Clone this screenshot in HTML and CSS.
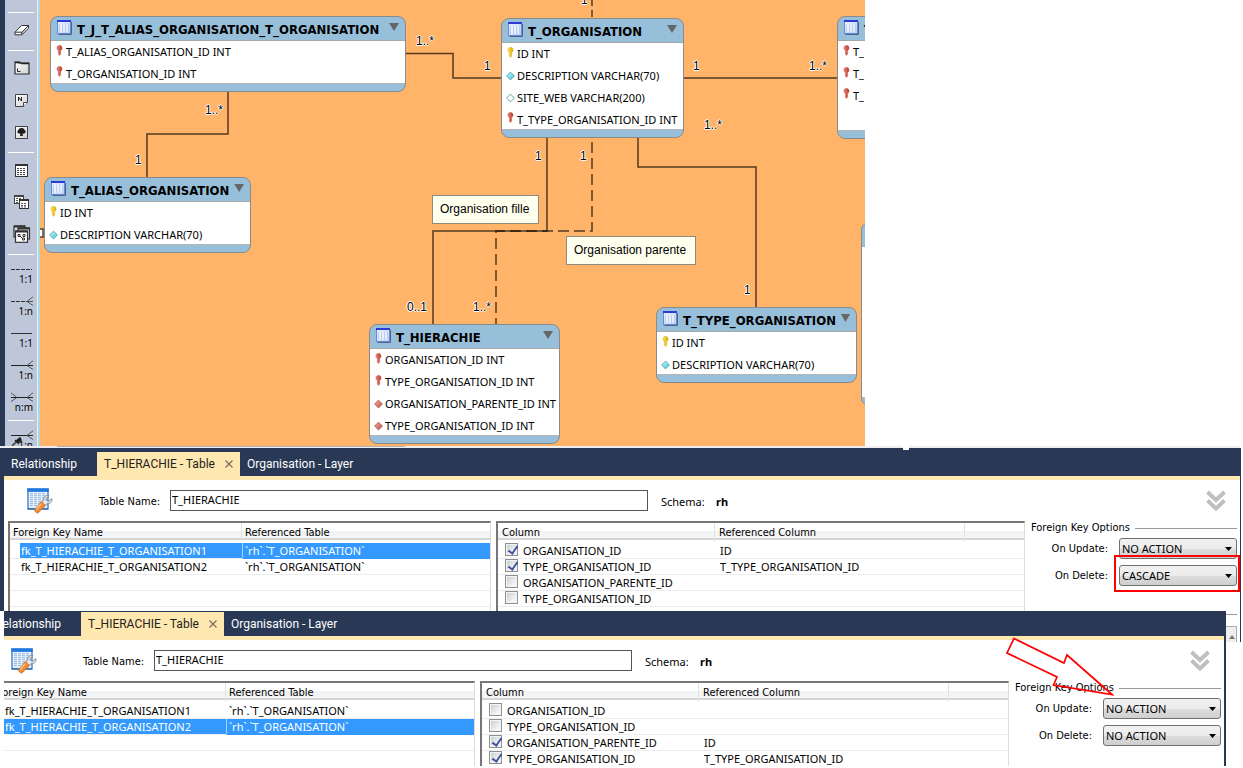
FILE: index.html
```html
<!DOCTYPE html>
<html lang="fr">
<head>
<meta charset="utf-8">
<title>T_HIERACHIE - Table</title>
<link rel="stylesheet" href="styles.css">
</head>
<body>
<svg class="defs" aria-hidden="true">
  <defs>
    <linearGradient id="gRed" x1="0" y1="0" x2="1" y2="0"><stop offset="0" stop-color="#e98276"/><stop offset="1" stop-color="#b63e33"/></linearGradient>
    <linearGradient id="gYellow" x1="0" y1="0" x2="1" y2="0"><stop offset="0" stop-color="#ffe95a"/><stop offset="1" stop-color="#d9a900"/></linearGradient>
    <linearGradient id="gCyan" x1="0" y1="0" x2="1" y2="1"><stop offset="0" stop-color="#c8fbff"/><stop offset="1" stop-color="#3cc5d2"/></linearGradient>
    <linearGradient id="gRose" x1="0" y1="0" x2="1" y2="1"><stop offset="0" stop-color="#f3b0a8"/><stop offset="1" stop-color="#c24a40"/></linearGradient>
    <linearGradient id="gPane" x1="0" y1="0" x2="1" y2="1"><stop offset="0" stop-color="#fff"/><stop offset="1" stop-color="#cfd0cf"/></linearGradient>
    <linearGradient id="gCols" x1="0" y1="0" x2="1" y2="1"><stop offset="0" stop-color="#eef4ff"/><stop offset="1" stop-color="#b5cdf5"/></linearGradient>
    <symbol id="table" viewBox="0 0 15 15">
      <path d="M1.500 14.500h13V2" fill="none" stroke="#4c6486"/>
      <rect x=".5" y=".5" width="13" height="13" fill="url(#gCols)" stroke="#6b87d8"/>
      <path d="M0 1h14" stroke="#2b3bd6" stroke-width="2"/>
      <path d="M2.500 4v8M5.500 4v8M8.500 4v8M11.500 4v8" stroke="#b9cdf3"/>
      <path d="M4 4v8M7 4v8M10 4v8" stroke="#fff"/>
    </symbol>
    <symbol id="keyRed" viewBox="0 0 7 11">
      <path d="M1 1.800 2.300.5h2.400L6 1.800v2.400L4.700 5.500V9l-1.200 1.500L2.300 9V5.500L1 4.200z" fill="url(#gRed)" stroke="#d0665b" stroke-width=".5"/>
    </symbol>
    <symbol id="keyYellow" viewBox="0 0 7 11">
      <path d="M1 1.800 2.300.5h2.400L6 1.800v2.400L4.700 5.500V9l-1.200 1.500L2.300 9V5.500L1 4.200z" fill="url(#gYellow)" stroke="#d8b21c" stroke-width=".5"/>
    </symbol>
    <symbol id="cyan" viewBox="0 0 9 9"><path d="M4.500.6 8.400 4.500 4.500 8.400.6 4.500z" fill="url(#gCyan)" stroke="#4b9ba5" stroke-width=".8"/></symbol>
    <symbol id="hollow" viewBox="0 0 9 9"><path d="M4.500.6 8.400 4.500 4.500 8.400.6 4.500z" fill="#fff" stroke="#4b9ba5" stroke-width=".9"/></symbol>
    <symbol id="rose" viewBox="0 0 9 9"><path d="M4.500.6 8.400 4.500 4.500 8.400.6 4.500z" fill="url(#gRose)" stroke="#a55850" stroke-width=".8"/></symbol>
    <symbol id="tableEdit" viewBox="0 0 26 26">
      <rect x="1" y="1" width="20" height="20" fill="#e9f2fd" stroke="#4f87cf" stroke-width="1.500"/>
      <path d="M.3 2.200h21.400" stroke="#1f7be0" stroke-width="3.400"/>
      <path d="M4.500 5v14M8.500 5v14M12.500 5v14M16.500 5v14" stroke="#a5bfe6" stroke-width="3" stroke-dasharray="1.200 .8"/>
      <path d="M1 20.800h20" stroke="#3c70b5" stroke-width="1.500"/>
      <path d="M24.800 10.500 22 13.200l-2.300-.6-.5-2.200 2.700-2.800c-2.600-1-5.400 1-5 4.100l-2.500 2.700 3.600 3.400 2.700-2.500c3 .5 4.900-2 4.100-4.800z" fill="#e4e6e8" stroke="#7e8388" stroke-width=".9"/>
      <path d="m14.300 13.700 4 3.800-7 7.200c-1.300 1-4.100-1.200-3.400-3.300z" fill="#f08a30" stroke="#bf5d17" stroke-width=".7"/>
      <path d="m14.300 15.500-5 6" stroke="#ffc68c" stroke-width="1.200"/>
    </symbol>
    <symbol id="chevrons" viewBox="0 0 20 21">
      <path d="m1.500 2 8.500 8 8.500-8M1.500 10.500l8.500 8 8.500-8" fill="none" stroke="#bfbfbf" stroke-width="4"/>
    </symbol>
  </defs>
</svg>

<main class="page">
  <section class="workspace">
    <nav class="tools" aria-label="Outils">
      <hr class="sep">
      <button class="tool" aria-label="Effacer"><svg width="16" height="12" viewBox="0 0 16 12"><path d="M1 8.200 7.500 1.500h7L8 8.200zM1 8.200v2.600h6.500l.5-2.600M8 10.800l6.500-6.600V1.500" fill="#fff" stroke="#333"/></svg></button>
      <hr class="sep">
      <button class="tool" aria-label="Calque"><svg width="16" height="14" viewBox="0 0 16 14"><path d="M1 1h4v1h10v11H1z" fill="url(#gPane)" stroke="#2f2f2f" stroke-width="1.200"/><path d="M1 1.500h6M7 2.500h8" stroke="#222" stroke-width="1.500"/><path d="M3.500 7.500v3h3" fill="none" stroke="#222"/></svg></button>
      <button class="tool" aria-label="Note"><svg width="13" height="13" viewBox="0 0 13 13"><path d="M.5.5h12v8l-4 4h-8z" fill="url(#gPane)" stroke="#444"/><path d="M12.500 8.500h-4v4" fill="#fff" stroke="#444"/><path d="M3.500 7V3l3 4V3" fill="none" stroke="#222"/></svg></button>
      <button class="tool" aria-label="Image"><svg width="13" height="13" viewBox="0 0 13 13"><rect x=".5" y=".5" width="12" height="12" fill="url(#gPane)" stroke="#444"/><path d="M6.500 2c2.500 0 2.600 1.500 3.400 2.300 1.600 1.600.6 3.700-2.400 3.400L8 10H5l.5-2.300C2.500 8 1.500 6 3.100 4.300 3.900 3.500 4 2 6.500 2z" fill="#1d1d1d"/></svg></button>
      <hr class="sep">
      <button class="tool" aria-label="Table"><svg width="13" height="13" viewBox="0 0 13 13"><rect x=".5" y=".5" width="12" height="12" fill="#fff" stroke="#333"/><path d="M0 1h13" stroke="#333" stroke-width="2"/><path d="M2 4.500h9M2 6.500h9M2 8.500h9M2 10.500h9" stroke="#444" stroke-dasharray="2 1"/></svg></button>
      <button class="tool" aria-label="Vue"><svg width="15" height="14" viewBox="0 0 15 14"><rect x=".5" y=".5" width="9" height="8" fill="#fff" stroke="#444"/><path d="M0 1h10" stroke="#444" stroke-width="2"/><path d="M2 3.500h6M2 5.500h3M2 7.500h3" stroke="#555" stroke-dasharray="2 1"/><rect x="5.500" y="4.500" width="9" height="9" fill="#fff" stroke="#333"/><path d="M5 5h10" stroke="#333" stroke-width="2"/><path d="M7 8.500h6M7 10.500h6M7 12h6" stroke="#555" stroke-dasharray="2 1"/></svg></button>
      <button class="tool" aria-label="Groupe de routines"><svg width="18" height="18" viewBox="0 0 18 18"><rect x="1" y="1" width="11" height="11" fill="#ddd" stroke="#333" stroke-width="1.200"/><path d="M1 1.500h11" stroke="#333" stroke-width="2"/><rect x="5" y="3" width="11.500" height="11" fill="#ddd" stroke="#333" stroke-width="1.200"/><path d="M5 3.500h12" stroke="#333" stroke-width="2"/><rect x="2.500" y="6" width="12" height="11.300" fill="#fff" stroke="#333" stroke-width="1.200"/><path d="M2.500 6.500h12" stroke="#333" stroke-width="2"/><path d="M5 9.500h2v2H5zM10 9.500h2v2h-2zM9.500 13h2v2h-2zM7 11l2.500 2.500" fill="none" stroke="#333"/></svg></button>
      <hr class="sep">
      <button class="tool rel"><svg width="22" height="10" viewBox="0 0 22 10"><path d="M0 5.500h21" stroke="#333" stroke-dasharray="4 1"/></svg><span>1:1</span></button>
      <button class="tool rel"><svg width="22" height="10" viewBox="0 0 22 10"><path d="M0 5.500h16" stroke="#333" stroke-dasharray="4 1"/><path d="m22 .8-6 4.700 6 4M16 5.500h6" fill="none" stroke="#555"/></svg><span>1:n</span></button>
      <button class="tool rel"><svg width="22" height="10" viewBox="0 0 22 10"><path d="M0 5.500h21" stroke="#333"/></svg><span>1:1</span></button>
      <button class="tool rel"><svg width="22" height="10" viewBox="0 0 22 10"><path d="M0 5.500h22" stroke="#222"/><path d="m22 .8-6 4.700 6 4" fill="none" stroke="#555"/></svg><span>1:n</span></button>
      <button class="tool rel"><svg width="22" height="10" viewBox="0 0 22 10"><path d="M0 5.500h22" stroke="#222"/><path d="m22 .8-6 4.700 6 4M0 .8l6 4.700-6 4" fill="none" stroke="#555"/></svg><span>n:m</span></button>
      <hr class="sep">
      <button class="tool rel pick"><svg width="22" height="20" viewBox="0 0 22 20"><path d="M0 5.500h22" stroke="#222"/><path d="m22 .8-6 4.700 6 4" fill="none" stroke="#555"/><path d="m1 16 5-5" stroke="#555" stroke-width="2"/><path d="m4 10 4 4M5 11l4-3 1 2-3 3z" fill="#222" stroke="#222" stroke-width="1.500"/></svg><span>1:n</span></button>
    </nav>

    <div class="canvas">
      <svg class="links" width="825" height="446" aria-hidden="true">
        <g transform="translate(-40 0)" fill="none" stroke="#000" stroke-opacity=".68" stroke-width="1.500">
          <path d="M406 53.500H453V78H501M228 92V134H147V177M684 78H837M547 138V231H433V324M638 138V167H756V307"/>
          <path d="M592 142V231H496V324" stroke-dasharray="11 5"/>
          <path d="M592 0V17" stroke-dasharray="6 4 12 1"/>
          <rect x="36" y="229" width="7" height="8" fill="#fff"/>
        </g>
      </svg>

      <article class="entity alias-link">
        <h2><svg><use href="#table"/></svg>T_J_T_ALIAS_ORGANISATION_T_ORGANISATION</h2>
        <ul>
          <li><svg class="key"><use href="#keyRed"/></svg>T_ALIAS_ORGANISATION_ID INT</li>
          <li><svg class="key"><use href="#keyRed"/></svg>T_ORGANISATION_ID INT</li>
        </ul>
      </article>
      <article class="entity alias">
        <h2><svg><use href="#table"/></svg>T_ALIAS_ORGANISATION</h2>
        <ul>
          <li><svg class="key"><use href="#keyYellow"/></svg>ID INT</li>
          <li><svg><use href="#cyan"/></svg>DESCRIPTION VARCHAR(70)</li>
        </ul>
      </article>
      <article class="entity organisation">
        <h2><svg><use href="#table"/></svg>T_ORGANISATION</h2>
        <ul>
          <li><svg class="key"><use href="#keyYellow"/></svg>ID INT</li>
          <li><svg><use href="#cyan"/></svg>DESCRIPTION VARCHAR(70)</li>
          <li><svg><use href="#hollow"/></svg>SITE_WEB VARCHAR(200)</li>
          <li><svg class="key"><use href="#keyRed"/></svg>T_TYPE_ORGANISATION_ID INT</li>
        </ul>
      </article>
      <article class="entity hierachie">
        <h2><svg><use href="#table"/></svg>T_HIERACHIE</h2>
        <ul>
          <li><svg class="key"><use href="#keyRed"/></svg>ORGANISATION_ID INT</li>
          <li><svg class="key"><use href="#keyRed"/></svg>TYPE_ORGANISATION_ID INT</li>
          <li><svg><use href="#rose"/></svg>ORGANISATION_PARENTE_ID INT</li>
          <li><svg><use href="#rose"/></svg>TYPE_ORGANISATION_ID INT</li>
        </ul>
      </article>
      <article class="entity type">
        <h2><svg><use href="#table"/></svg>T_TYPE_ORGANISATION</h2>
        <ul>
          <li><svg class="key"><use href="#keyYellow"/></svg>ID INT</li>
          <li><svg><use href="#cyan"/></svg>DESCRIPTION VARCHAR(70)</li>
        </ul>
      </article>
      <article class="entity edge-top">
        <h2><svg><use href="#table"/></svg>T</h2>
        <ul>
          <li><svg class="key"><use href="#keyRed"/></svg>T_</li>
          <li><svg class="key"><use href="#keyRed"/></svg>T_</li>
          <li><svg class="key"><use href="#keyRed"/></svg>T_</li>
        </ul>
      </article>
      <article class="entity edge-low"><h2></h2><ul></ul></article>

      <p class="note fille">Organisation fille</p>
      <p class="note parente">Organisation parente</p>

      <span class="card" style="left:541px;top:-7px">1</span>
      <span class="card" style="left:376px;top:34px">1..*</span>
      <span class="card" style="left:444px;top:59px">1</span>
      <span class="card" style="left:165px;top:103px">1..*</span>
      <span class="card" style="left:95px;top:153px">1</span>
      <span class="card" style="left:653px;top:59px">1</span>
      <span class="card" style="left:769px;top:59px">1..*</span>
      <span class="card" style="left:664px;top:118px">1..*</span>
      <span class="card" style="left:495px;top:149px">1</span>
      <span class="card" style="left:540px;top:149px">1</span>
      <span class="card" style="left:367px;top:300px">0..1</span>
      <span class="card" style="left:433px;top:300px">1..*</span>
      <span class="card" style="left:704px;top:283px">1</span>
    </div>
    <div class="blank"></div>
  </section>
  <div class="splitter"><i></i></div>

  <section class="editor first">
    <div class="tabs">
      <button class="tab">Relationship</button>
      <button class="tab active">T_HIERACHIE - Table <svg width="8" height="8" viewBox="0 0 8 8"><path d="m.5.5 7 7m0-7-7 7" stroke="#77705c" stroke-width="1.200"/></svg></button>
      <button class="tab">Organisation - Layer</button>
    </div>
    <div class="sheet">
      <div class="name-row">
        <svg class="big"><use href="#tableEdit"/></svg>
        <label for="name1">Table Name:</label>
        <input class="name" id="name1" type="text" value="T_HIERACHIE">
        <span class="schema">Schema:</span><b>rh</b>
        <button class="fold" aria-label="Replier"><svg><use href="#chevrons"/></svg></button>
      </div>
      <div class="panes">
        <table class="grid keys">
          <colgroup><col class="k1"><col></colgroup>
          <thead><tr><th>Foreign Key Name</th><th>Referenced Table</th></tr></thead>
          <tbody>
            <tr class="on"><td>fk_T_HIERACHIE_T_ORGANISATION1</td><td>`rh`.`T_ORGANISATION`</td></tr>
            <tr><td>fk_T_HIERACHIE_T_ORGANISATION2</td><td>`rh`.`T_ORGANISATION`</td></tr>
            <tr><td></td><td></td></tr>
            <tr><td></td><td></td></tr>
            <tr><td></td><td></td></tr>
          </tbody>
        </table>
        <table class="grid cols">
          <colgroup><col class="c1"><col class="c2"><col></colgroup>
          <thead><tr><th>Column</th><th>Referenced Column</th><th></th></tr></thead>
          <tbody>
            <tr><td><label><input type="checkbox" checked>ORGANISATION_ID</label></td><td>ID</td><td></td></tr>
            <tr><td><label><input type="checkbox" checked>TYPE_ORGANISATION_ID</label></td><td>T_TYPE_ORGANISATION_ID</td><td></td></tr>
            <tr><td><label><input type="checkbox">ORGANISATION_PARENTE_ID</label></td><td></td><td></td></tr>
            <tr><td><label><input type="checkbox">TYPE_ORGANISATION_ID</label></td><td></td><td></td></tr>
            <tr><td></td><td></td><td></td></tr>
          </tbody>
        </table>
        <div class="options">
          <div class="legend">Foreign Key Options</div>
          <div class="field"><label for="u1">On Update:</label><span class="drop"><select id="u1"><option>NO ACTION</option></select></span></div>
          <div class="field"><label for="d1">On Delete:</label><span class="drop marked"><select id="d1"><option>CASCADE</option></select></span></div>
          <div class="more"><span></span></div>
        </div>
      </div>
    </div>
  </section>

  <section class="editor second">
    <div class="shift">
      <div class="tabs">
        <button class="tab">Relationship</button>
        <button class="tab active">T_HIERACHIE - Table <svg width="8" height="8" viewBox="0 0 8 8"><path d="m.5.5 7 7m0-7-7 7" stroke="#77705c" stroke-width="1.200"/></svg></button>
        <button class="tab">Organisation - Layer</button>
      </div>
      <div class="sheet">
        <div class="name-row">
          <svg class="big"><use href="#tableEdit"/></svg>
          <label for="name2">Table Name:</label>
          <input class="name" id="name2" type="text" value="T_HIERACHIE">
          <span class="schema">Schema:</span><b>rh</b>
          <button class="fold" aria-label="Replier"><svg><use href="#chevrons"/></svg></button>
        </div>
        <div class="panes">
          <table class="grid keys">
            <colgroup><col class="k1"><col></colgroup>
            <thead><tr><th>Foreign Key Name</th><th>Referenced Table</th></tr></thead>
            <tbody>
              <tr><td>fk_T_HIERACHIE_T_ORGANISATION1</td><td>`rh`.`T_ORGANISATION`</td></tr>
              <tr class="on"><td>fk_T_HIERACHIE_T_ORGANISATION2</td><td>`rh`.`T_ORGANISATION`</td></tr>
              <tr><td></td><td></td></tr>
              <tr><td></td><td></td></tr>
              <tr><td></td><td></td></tr>
            </tbody>
          </table>
          <table class="grid cols">
            <colgroup><col class="c1"><col class="c2"><col></colgroup>
            <thead><tr><th>Column</th><th>Referenced Column</th><th></th></tr></thead>
            <tbody>
              <tr><td><label><input type="checkbox">ORGANISATION_ID</label></td><td></td><td></td></tr>
              <tr><td><label><input type="checkbox">TYPE_ORGANISATION_ID</label></td><td></td><td></td></tr>
              <tr><td><label><input type="checkbox" checked>ORGANISATION_PARENTE_ID</label></td><td>ID</td><td></td></tr>
              <tr><td><label><input type="checkbox" checked>TYPE_ORGANISATION_ID</label></td><td>T_TYPE_ORGANISATION_ID</td><td></td></tr>
              <tr><td></td><td></td><td></td></tr>
            </tbody>
          </table>
          <div class="options">
            <div class="legend">Foreign Key Options</div>
            <div class="field"><label for="u2">On Update:</label><span class="drop"><select id="u2"><option>NO ACTION</option></select></span></div>
            <div class="field"><label for="d2">On Delete:</label><span class="drop"><select id="d2"><option>NO ACTION</option></select></span></div>
          </div>
        </div>
      </div>
    </div>
    <svg class="arrow" width="110" height="62" viewBox="0 0 110 62" aria-hidden="true"><path d="M10 2.500 60 27 63 19 108 58.500 49.500 49 53 41 3 17z" fill="none" stroke="#f00" stroke-width="1.700"/></svg>
  </section>
</main>
</body>
</html>
```
FILE: styles.css
```css
* { box-sizing: border-box; }
body {
  margin: 0;
  background: #fff;
  color: #000;
  font: 11px/16px "Noto Sans", "DejaVu Sans Condensed", sans-serif;
}
.defs { position: absolute; width: 0; height: 0; }
h2, p, ul { margin: 0; padding: 0; list-style: none; }
button { border: 0; background: none; padding: 0; font: inherit; color: inherit; }
.page { overflow: hidden; }

/* Diagram workspace */
.workspace { display: flex; height: 446px; }
.tools {
  flex: none;
  width: 40px;
  padding-top: 8px;
  background: #bdc7d9;
  border-left: 5px solid #293955;
  border-right: 2px solid #a9d9de;
  box-shadow: inset -1px 0 #e9eef5;
  overflow: hidden;
}
.sep { height: 6px; margin: 0 4px 0 3px; border: 0; background: linear-gradient(#fff, #fff) 0 4px / 100% 1px no-repeat; }
.tool { display: flex; align-items: center; justify-content: center; width: 33px; height: 32px; }
.tool.rel {
  flex-direction: column;
  align-items: flex-end;
  justify-content: flex-start;
  padding: 8px 5px 0 0;
  font-size: 10px;
  line-height: 10px;
}
.tool.pick svg { margin-bottom: -10px; }
.canvas { position: relative; flex: 825 1 0; background: #ffb469; overflow: hidden; }
.blank { flex: 378 1 0; }
.links { position: absolute; left: 0; top: 0; }

.entity {
  position: absolute;
  background: #98bfda;
  border: 1px solid #8a8a8a;
  border-radius: 8px;
  padding-bottom: 7px;
}
.entity h2 {
  display: flex;
  align-items: center;
  gap: 5px;
  height: 24px;
  padding: 2px 6px 0;
  border-bottom: 1px solid #a8a8a8;
  font: bold 13px/16px "DejaVu Sans Condensed", "Noto Sans", sans-serif;
}
.entity h2 svg { flex: none; width: 15px; height: 15px; margin-top: -4px; }
.entity h2::after {
  content: "";
  width: 10px;
  height: 8px;
  margin: -5px 0 0 auto;
  background: #666;
  clip-path: polygon(0 0, 100% 0, 50% 100%);
}
.entity ul {
  display: flex;
  flex-direction: column;
  gap: 2px;
  padding-top: 1px;
  background: #fff;
  border-bottom: 1px solid #b5b5b5;
}
.entity li { display: flex; align-items: center; height: 20px; padding-left: 4px; gap: 2px; white-space: nowrap; }
.entity li:last-child { height: 19px; }
.entity li svg { flex: none; width: 9px; height: 10px; }
.entity li .key { height: 11px; margin-top: -4px; }
.alias-link { left: 10px; top: 16px; width: 356px; }
.alias { left: 4px; top: 177px; width: 207px; }
.organisation { left: 461px; top: 18px; width: 183px; }
.hierachie { left: 329px; top: 324px; width: 191px; }
.type { left: 616px; top: 307px; width: 201px; }
.edge-top { left: 797px; top: 16px; width: 180px; }
.edge-top ul { padding-bottom: 25px; }
.edge-low { left: 821px; top: 222px; width: 120px; }
.edge-low ul { height: 151px; }

.note {
  position: absolute;
  padding: 6px 9px 6px 7px;
  border: 1px solid #8c8c80;
  background: #ffffee;
  font: 12px/15px "Liberation Sans", Arial, sans-serif;
  white-space: nowrap;
}
.fille { left: 392px; top: 195px; }
.parente { left: 526px; top: 236px; }
.card {
  position: absolute;
  font: 12px/14px "Liberation Sans", Arial, sans-serif;
  text-shadow: 1px 0 #fff, -1px 0 #fff, 0 1px #fff, 0 -1px #fff;
}

.splitter {
  position: relative;
  height: 2px;
  margin-right: 3px;
  background: linear-gradient(#b0b0b0, #b0b0b0) 57px 0 / 348px 1px no-repeat #eee;
}
.splitter i { position: absolute; z-index: 1; left: 903px; top: 0; width: 6px; height: 4px; background: #fff; }

/* Table editors */
.editor { position: relative; background: #fff; }
.first { margin-right: 2px; height: 194px; border-right: 1px solid #293955; overflow: hidden; }
.first::before { content: ""; position: absolute; left: 0; top: 0; width: 4px; height: 163px; background: #293955; }
.first .tabs, .first .sheet { margin-left: 4px; }
.second {
  margin: -31px 17px 0 4px;
  border-right: 2px solid #293955;
  overflow: hidden;
  height: 155px;
}
.shift { margin-left: -16px; }
.tabs {
  display: flex;
  padding-top: 4px;
  background: #293955;
  border-bottom: 4px solid #ffe8b0;
  color: #fff;
  font: 12px/24px Roboto, "Liberation Sans", sans-serif;
}
.second .tabs { padding-top: 1px; }
.tab { padding: 0 7px; white-space: nowrap; }
.tab:first-child { width: 93px; text-align: left; }
.tab.active { display: flex; align-items: center; justify-content: space-between; width: 143px; background: #ffe8b0; color: #222; }
.sheet { height: 162px; overflow: hidden; }
.name-row { display: flex; align-items: center; height: 41px; padding: 0 14px 0 23px; }
.name-row label, .grid th, .legend, .field label { font-family: "DejaVu Sans Condensed", "Noto Sans", sans-serif; }
.big { flex: none; width: 26px; height: 26px; margin-right: 46px; }
.name-row label, .schema { padding-top: 3px; }
.name-row label { width: 71px; }
.name {
  flex: 0 1 478px;
  min-width: 0;
  height: 21px;
  padding: 0 1px 3px;
  border: 1px solid #555;
  background: #fff;
  font: inherit;
}
.schema { width: 55px; margin-left: 13px; }
.name-row b { padding-top: 3px; }
.fold { width: 20px; height: 21px; margin-left: auto; }
.fold svg { display: block; width: 20px; height: 21px; }
.panes {
  display: grid;
  grid-template-columns: minmax(0, 483fr) 5px minmax(0, 529fr) 6px 209px;
  align-items: start;
  padding-left: 4px;
}
.keys { grid-column: 1; }
.cols { grid-column: 3; }
.options { grid-column: 5; }

.grid {
  width: 100%;
  table-layout: fixed;
  border-collapse: separate;
  border-spacing: 0;
  border: 1px solid #ddd;
  border-top: 2px solid #777;
  border-left: 2px solid #777;
}
.grid th, .grid td { padding: 0; text-align: left; white-space: nowrap; line-height: 15px; font-weight: normal; }
.grid th {
  height: 20px;
  padding: 2px 0 0 4px;
  border-bottom: 3px solid #fff;
  border-right: 1px solid #e2e2e2;
  background: linear-gradient(#fff 45%, #f1f2f4 46%, #f4f5f6 90%, #d5d5d5 91%);
}
.grid th:last-child { border-right: 0; }
.grid td { height: 16px; border-bottom: 1px solid #ededed; }
.grid.keys th { padding-left: 3px; }
.k1 { width: 232px; }
.c1 { width: 217px; }
.c2 { width: 250px; }
.keys td:first-child { padding-left: 11px; }
.keys td + td { padding-left: 2px; border-left: 1px solid transparent; }
.cols td + td { padding-left: 5px; }
.on td { color: #fff; background: #3399ff; border-bottom-color: #3399ff; }
.on td:first-child {
  background: linear-gradient(#39f, #39f) 10px 0 no-repeat;
  border-bottom-color: #ededed;
}
.keys .on td + td { border-left-color: #a9d1fb; }
.cols label { display: flex; align-items: center; gap: 5px; height: 15px; padding-left: 7px; }
.cols input {
  appearance: none;
  flex: none;
  position: relative;
  width: 13px;
  height: 13px;
  margin: 0 0 2px;
  border: 1px solid #8e8f8f;
  background: linear-gradient(135deg, #c4c9d1, #f6f6f6 75%);
  box-shadow: inset 0 0 0 1px #f4f4f4;
}
.cols input:checked::after {
  content: "";
  position: absolute;
  left: 4px;
  top: 0;
  width: 4px;
  height: 8px;
  border: solid #3f56a0;
  border-width: 0 2px 2px 0;
  rotate: 35deg;
}

.options { padding-right: 3px; }
.legend { display: flex; align-items: center; gap: 5px; height: 14px; margin-bottom: 3px; }
.legend::after { content: ""; flex: 1; height: 1px; background: #999; }
.field { display: flex; align-items: center; justify-content: flex-end; gap: 11px; margin-bottom: 6px; }
.drop { position: relative; width: 118px; height: 21px; }
.drop::after {
  content: "";
  position: absolute;
  right: 5px;
  top: 9px;
  width: 7px;
  height: 4px;
  background: #000;
  clip-path: polygon(0 0, 100% 0, 50% 100%);
}
.drop select {
  appearance: none;
  width: 100%;
  height: 21px;
  padding: 0 2px;
  border: 1px solid #707070;
  border-radius: 3px;
  background: linear-gradient(#f2f2f2, #ebebeb 50%, #dddddd 51%, #cfcfcf);
  color: #000;
  font: inherit;
}
.marked::before {
  content: "";
  position: absolute;
  z-index: 1;
  inset: -10px -3px -6px -5px;
  border: 2px solid #f00;
}
.more { margin-top: 28px; border-top: 1px solid #999; padding-top: 11px; }
.more span { display: block; height: 20px; border: 1px solid #aaa; background: #eee; }
.more span::after {
  content: "";
  display: block;
  width: 6px;
  height: 4px;
  margin: 8px 1px 0 auto;
  background: #777;
  clip-path: polygon(50% 0, 100% 100%, 0 100%);
}
.arrow { position: absolute; right: 110px; top: 25px; }
```
